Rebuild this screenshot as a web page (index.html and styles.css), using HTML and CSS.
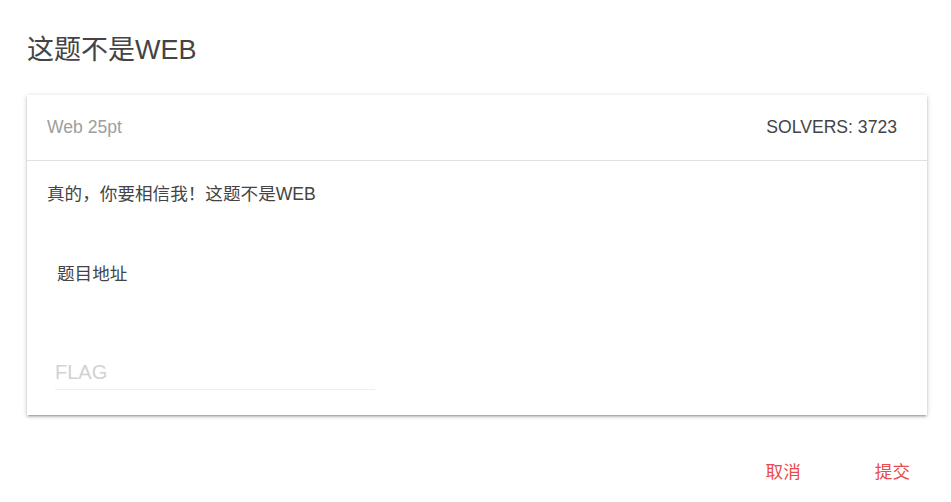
FILE: index.html
```html
<!DOCTYPE html>
<html lang="zh-CN">
<head>
  <meta charset="UTF-8">
  <title>这题不是WEB</title>
  <meta name="viewport" content="width=device-width, initial-scale=1.0">
  <link rel="stylesheet" href="styles.css">
</head>
<body>
  <div class="modal">
    <h4 class="title">这题不是WEB</h4>

    <!-- Challenge card -->
    <div class="card">
      <div class="card-head">
        <span class="category">Web 25pt</span>
        <span class="solvers">SOLVERS: 3723</span>
      </div>
      <div class="card-body">
        <p class="desc">真的，你要相信我！这题不是WEB</p>
        <a class="link" href="#">题目地址</a>
        <input class="flag" type="text" placeholder="FLAG">
      </div>
    </div>

    <!-- Footer buttons -->
    <div class="footer">
      <a class="btn-flat" href="#">取消</a>
      <a class="btn-flat" href="#">提交</a>
    </div>
  </div>
</body>
</html>
```

FILE: styles.css
```css
* {
  box-sizing: border-box;
  font-family: "Liberation Sans", "Noto Sans CJK SC", sans-serif;
}

body {
  margin: 0;
  background: #fff;
  color: #444;
}

.modal {
  padding: 30px 24px 0 27px;
}

.title {
  margin: 0;
  font-size: 27px;
  font-weight: 400;
  line-height: 40px;
  color: #444;
}

.card {
  margin-top: 25px;
  background: #fff;
  box-shadow: 0 2px 2px 0 rgba(0,0,0,0.14), 0 3px 1px -2px rgba(0,0,0,0.12), 0 1px 5px 0 rgba(0,0,0,0.2);
}

.card-head {
  display: flex;
  justify-content: space-between;
  align-items: center;
  height: 66px;
  padding: 0 30px 0 20px;
  font-size: 17.6px;
  border-bottom: 1px solid #e0e0e0;
}

.category {
  color: #9e9e9e;
}

.solvers {
  color: #444;
}

.card-body {
  display: flex;
  flex-direction: column;
  align-items: flex-start;
  padding: 22px 20px 25px;
  font-size: 17.6px;
}

.desc {
  margin: 0;
  line-height: 22px;
}

.link {
  margin: 58px 0 0 10px;
  line-height: 22px;
  color: #444;
  text-decoration: none;
}

.flag {
  margin: 70px 0 0 8px;
  width: 320px;
  height: 35px;
  padding: 0;
  border: none;
  border-bottom: 1px solid #eee;
  outline: none;
  font-size: 20px;
  color: #444;
  background: transparent;
}

.flag::placeholder {
  color: #d2d2d2;
}

.footer {
  display: flex;
  justify-content: flex-end;
  gap: 40px;
  margin-top: 39px;
}

.btn-flat {
  padding: 0 17px;
  line-height: 36px;
  font-size: 17.6px;
  color: #e84b4b;
  text-decoration: none;
}
```
